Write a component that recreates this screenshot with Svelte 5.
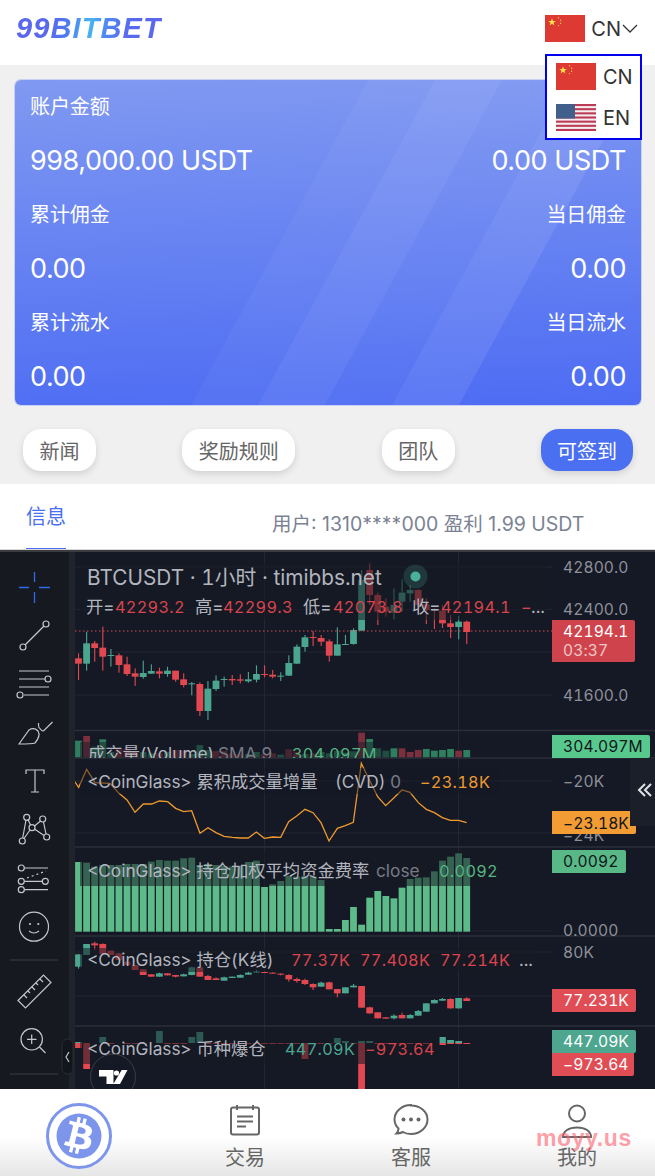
<script>
  const X = (i) => 78.5 + i * 8.088;
  const price = [
    ['r',325,341,310,390],['g',280,341,245,362],['r',280,294,273,335],['r',293,320,230,362],['g',315,318,297,350],
    ['r',316,345,310,368],['r',343,372,320,378],['r',370,380,355,408],['g',369,381,332,386],['g',363,371,343,372],
    ['r',364,371,353,385],['g',362,372,350,380],['r',362,389,362,395],['r',388,405,370,412],['g',400,402,396,436],
    ['r',402,483,397,498],['g',416,483,393,510],['g',392,417,376,423],['g',387,390,380,410],['r',387,391,375,405],
    ['r',388,392,373,400],['g',388,394,366,398],['g',372,389,346,397],['r',372,375,346,382],['r',374,380,360,385],
    ['g',377,379,367,393],['g',339,377,316,378],['g',290,341,283,342],['g',262,291,255,305],['r',261,264,243,288],
    ['r',264,275,255,288],['r',274,317,268,335],['g',283,317,232,317],['g',282,284,255,284],['g',240,282,235,284],
    ['g',90,242,60,242],['r',60,135,40,165],['r',135,185,128,225],['r',170,185,145,200],['g',165,188,115,208],
    ['g',128,155,88,185],['g',120,130,105,155],['r',120,165,118,195],['r',163,180,145,222],['r',178,180,175,237],
    ['r',182,220,165,234],['r',220,231,195,264],['g',215,231,198,268],['r',215,246,212,282]
  ];
  const interest = [
    ['g',583,620,583,626],['g',552,585,552,585],['r',550,556,545,570],['r',552,582,550,582],['r',572,585,572,585],
    ['r',580,600,580,600],['r',605,615,605,615],['r',615,630,615,630],['r',628,645,628,645],['r',643,650,643,650],
    ['g',640,650,638,650],['r',640,646,640,646],['r',645,650,645,652],['g',643,649,641,649],['g',622,645,620,646],
    ['r',622,650,620,650],['r',648,660,645,660],['r',655,660,652,660],['g',652,662,650,662],['g',650,654,650,654],
    ['g',645,653,643,653],['g',638,644,635,644],['g',634,637,630,637],['r',636,638,634,638],['r',638,640,637,640],
    ['r',641,644,640,646],['r',645,658,643,665],['r',657,663,653,668],['r',660,672,656,675],['r',672,682,670,690],
    ['g',668,680,665,680],['r',667,688,665,688],['r',687,700,687,712],['g',682,700,682,700],['g',677,682,672,682],
    ['r',678,743,678,743],['r',742,760,740,762],['r',757,775,757,775],['r',772,776,772,776],['g',767,775,763,778],
    ['r',765,775,758,775],['g',765,775,762,775],['g',753,767,750,767],['g',730,755,730,755],['g',720,730,718,730],
    ['g',717,722,714,722],['r',717,745,715,746],['g',714,745,714,746],['r',715,723,712,723]
  ];
  const volTops = [572,558,590,568,606,598,596,603,606,610,610,606,600,602,612,585,600,603,603,610,612,612,606,612,610,614,598,605,612,610,606,610,603,608,604,548,567,595,602,595,595,606,600,597,602,600,597,602,600];
  const volColor = 'grgggrrrggrgrrgggrrrrggrrgrrgrgggggrggggrrrggggrg';
  const fundTops = [306,308,320,315,315,315,312,312,312,305,300,302,302,295,293,315,312,315,318,320,318,306,302,381,373,363,347,350,348,350,360,507,507,480,441,494,413,393,408,415,383,357,353,352,334,302,290,280,294,303];
  const cvd = [[223,63],[236,82],[260,28],[285,68],[330,70],[357,100],[381,120],[405,157],[430,132],[455,132],[478,123],[503,125],[527,145],[551,155],[575,152],[600,220],[624,203],[648,218],[672,229],[697,232],[721,234],[745,234],[769,216],[793,235],[818,231],[842,232],[866,185],[891,167],[915,148],[939,158],[963,188],[987,243]];
  const cvdRight = [[12,243],[37,205],[61,197],[85,187],[109,10],[133,60],[158,110],[182,137],[207,113],[231,90],[255,97],[280,128],[304,148],[328,158],[352,173],[376,181],[401,181],[425,188]];
  const cvdLine = [
    ...cvd.map(([x, y]) => `${x / 3},${760 + y / 3}`),
    ...cvdRight.map(([x, y]) => `${325 + x / 3},${760 + y / 3}`)
  ].join(' ');
  // Long-side and short-side liquidations, index and height in px from the baseline
  const longs = [[0,1],[3,6],[10,12],[14,6],[15,11],[32,5],[33,2],[35,2],[36,2],[45,6],[46,3],[47,2]];
  const shorts = [[0,5],[1,26],[35,50],[28,16],[34,1],[45,2],[46,1],[47,1],[48,1]];
  const dashes = [4,6,7,8,11,12,13,16,17,18,19,20,21,22,23,24,25,26,27,29,30,31,37,38,39,40,41,42,43];
  const fills = { g: '#4ba68f', r: '#e2484f' };
  const rows = [
    { l: '账户金额', v: '998,000.00 USDT', rl: '团队金额', rv: '0.00 USDT' },
    { l: '累计佣金', v: '0.00', rl: '当日佣金', rv: '0.00' },
    { l: '累计流水', v: '0.00', rl: '当日流水', rv: '0.00' }
  ];
  const links = ['新闻', '奖励规则', '团队'];
  const stripes = [0, 134];
  const usStripes = [0, 2, 4, 6, 8, 10, 12];
</script>

{#snippet cnFlag()}
  <svg class="flag" viewBox="0 0 40 27">
    <rect width="40" height="27" fill="#de3a34" />
    <path d="M7 3.200l.95 2.700 2.850.1-2.250 1.750.8 2.700-2.350-1.600-2.350 1.600.8-2.700-2.250-1.750 2.850-.1z" fill="#f8e04a" />
    <g fill="#f2c94a">
      <circle cx="13.500" cy="2.800" r=".7" /><circle cx="15.600" cy="5.200" r=".7" />
      <circle cx="15.600" cy="8.200" r=".7" /><circle cx="13.500" cy="10.600" r=".7" />
    </g>
  </svg>
{/snippet}

{#snippet usFlag()}
  <svg class="flag" viewBox="0 0 40 27">
    <defs>
      <pattern id="usa-stars" width="2" height="2" patternUnits="userSpaceOnUse">
        <circle cx="1" cy="1" r=".45" fill="#b6c4da" />
      </pattern>
    </defs>
    <rect width="40" height="27" fill="#f4eef0" />
    {#each usStripes as s}
      <rect y={s * 2.077} width="40" height="2.077" fill="#bb3a55" />
    {/each}
    <rect width="19" height="14.500" fill="#30517f" />
    <rect width="19" height="14.500" fill="url(#usa-stars)" />
  </svg>
{/snippet}

{#snippet candles(list, base)}
  {#each list as [c, top, bot, wt, wb], i}
    <rect x={X(i) - 0.5} y={base + wt / 3} width="1.100" height={Math.max(0, (wb - wt) / 3)} fill={fills[c]} />
    <rect x={X(i) - 3.400} y={base + top / 3} width="6.800" height={Math.max(1, (bot - top) / 3)} fill={fills[c]} />
  {/each}
{/snippet}

<div class="page">
  <header class="top">
    <span class="logo">99BITBET</span>
    <div class="lang">
      {@render cnFlag()}
      <span>CN</span>
      <svg class="chev" viewBox="0 0 16 9"><path d="M1 1l7 7 7-7" /></svg>
    </div>
    <ul class="menu">
      <li>{@render cnFlag()}<span>CN</span></li>
      <li>{@render usFlag()}<span>EN</span></li>
    </ul>
  </header>

  <section class="summary">
    <div class="card">
      <svg class="sheen" viewBox="0 0 626 325" preserveAspectRatio="none">
        {#each stripes as dx}
          <path d={`M${176 + dx} 325L${243 + dx} 325L${420 + dx} 0L${353 + dx} 0Z`} fill="#fff" opacity=".04" />
          <path d={`M${243 + dx} 325L${310 + dx} 325L${487 + dx} 0L${420 + dx} 0Z`} fill="#fff" opacity=".085" />
        {/each}
      </svg>
      {#each rows as r}
        <div class="row">
          <div><p class="label">{r.l}</p><p class="value">{r.v}</p></div>
          <div class="end"><p class="label">{r.rl}</p><p class="value">{r.rv}</p></div>
        </div>
      {/each}
    </div>
    <nav class="links">
      {#each links as item}
        <button>{item}</button>
      {/each}
      <button class="primary">可签到</button>
    </nav>
  </section>

  <section class="notice">
    <span class="tab">信息</span>
    <span class="ticker">用户: 1310****000 盈利 1.99 USDT</span>
  </section>

  <svg class="chart" viewBox="0 550 655 539" width="655" height="539">
    <rect x="0" y="550" width="655" height="539" fill="#151925" />
    <rect x="0" y="550" width="655" height="2" fill="#3a3c40" />

    <!-- grid -->
    <g class="grid">
      {#each [567, 609.6, 652, 695, 781, 833, 931, 952, 996] as y}
        <line x1="75" x2="552" y1={y} y2={y} />
      {/each}
      <line x1="264.500" x2="264.500" y1="552" y2="1089" />
      <line x1="458.500" x2="458.500" y1="552" y2="1089" />
    </g>

    <!-- price pane -->
    {@render candles(price, 550)}
    <rect x="80" y="563" width="467" height="57" fill="#151925" opacity=".55" />
    <circle cx="415.500" cy="576.500" r="12" fill="#4ba68f" opacity=".22" />
    <circle cx="415.500" cy="576.500" r="5" fill="#4bb09a" />
    <line class="last" x1="75" x2="552" y1="631" y2="631" />

    <!-- volume pane -->
    {#each volTops as t, i}
      <rect x={X(i) - 3.400} y={550 + t / 3} width="6.800" height={(623 - t) / 3}
        fill={volColor[i] === 'g' ? '#2d7f5f' : '#7c2f3c'} />
    {/each}
    <rect x="80" y="742" width="310" height="16" fill="#151925" opacity=".5" />

    <!-- cumulative volume delta -->
    <polyline class="cvd" points={cvdLine} />
    <rect x="80" y="768" width="420" height="26" fill="#151925" opacity=".45" />

    <!-- funding rate bars -->
    {#each fundTops as t, i}
      {#if i < 49}
        <rect x={X(i) - 3.400} y={760 + t / 3} width="6.800" height={(515 - t) / 3} fill="#5dbb8a" />
      {/if}
    {/each}
    <rect x="80" y="850" width="420" height="36" fill="#151925" opacity=".55" />

    <!-- open interest candles -->
    {@render candles(interest, 760)}
    <rect x="80" y="948" width="455" height="24" fill="#151925" opacity=".55" />

    <!-- liquidations -->
    {#each dashes as i}
      <rect x={X(i) - 3.400} y="1043" width="6.800" height="1" fill="#e2484f" />
    {/each}
    {#each longs as [i, h]}
      <rect x={X(i) - 3.400} y={1043 - h} width="6.800" height={h} fill="#4ba68f" />
    {/each}
    {#each shorts as [i, h]}
      <rect x={X(i) - 3.400} y="1043" width="6.800" height={h} fill="#e2484f" />
    {/each}
    <rect x="80" y="1030" width="360" height="34" fill="#151925" opacity=".55" />

    <!-- pane separators -->
    <g class="seps">
      {#each [730.5, 758, 847, 936, 1026] as y}
        <line x1="75" x2="655" y1={y} y2={y} />
      {/each}
    </g>

    <!-- legends -->
    <g class="legend">
      <text x="87" y="585" class="title">BTCUSDT · 1小时 · timibbs.net</text>
      <text x="86" y="613">开=</text><text x="115" y="613" class="red">42293.2</text>
      <text x="195" y="613">高=</text><text x="223" y="613" class="red">42299.3</text>
      <text x="303" y="613">低=</text><text x="333" y="613" class="red">42073.8</text>
      <text x="412" y="613">收=</text><text x="441" y="613" class="red">42194.1</text>
      <text x="521" y="613" class="red">−</text><text x="531" y="613">...</text>

      <svg x="0" y="732" width="552" height="26" viewBox="0 732 552 26">
        <text x="88" y="760">成交量(Volume)</text>
        <text x="218" y="760" class="mute">SMA 9</text>
        <text x="292" y="760" class="lime">304.097M</text>
      </svg>

      <text x="87" y="788">&lt;CoinGlass&gt; 累积成交量增量</text>
      <text x="335" y="788">(CVD)</text>
      <text x="390" y="788" class="mute">0</text>
      <text x="420" y="788" class="amber">−23.18K</text>

      <text x="87" y="877">&lt;CoinGlass&gt; 持仓加权平均资金费率</text>
      <text x="376" y="877" class="mute">close</text>
      <text x="439" y="877" class="lime">0.0092</text>

      <text x="87" y="966">&lt;CoinGlass&gt; 持仓(K线)</text>
      <text x="291" y="966" class="red">77.37K</text>
      <text x="360" y="966" class="red">77.408K</text>
      <text x="440" y="966" class="red">77.214K</text>
      <text x="519" y="966">...</text>

      <text x="87" y="1055">&lt;CoinGlass&gt; 币种爆仓</text>
      <text x="285" y="1055" class="teal">447.09K</text>
      <text x="365" y="1055" class="red">−973.64</text>
    </g>

    <!-- price scale -->
    <g class="scale">
      <text x="563" y="572.500">42800.0</text>
      <text x="563" y="615">42400.0</text>
      <text x="563" y="700.500">41600.0</text>
      <text x="563" y="787">−20K</text>
      <text x="563" y="841">−24K</text>
      <text x="563" y="936">0.0000</text>
      <text x="563" y="958">80K</text>
    </g>
    <g class="tags">
      <path d="M552 620h81a2 2 0 0 1 2 2v38a2 2 0 0 1-2 2h-81z" fill="#cf444c" />
      <text x="563" y="637" fill="#fff">42194.1</text>
      <text x="563" y="656" fill="#f0c5c8">03:37</text>
      <path d="M552 735h96a2 2 0 0 1 2 2v19a2 2 0 0 1-2 2h-96z" fill="#58c98c" />
      <text x="563" y="752" fill="#10151c">304.097M</text>
      <path d="M552 811h82a2 2 0 0 1 2 2v19a2 2 0 0 1-2 2h-82z" fill="#f29c33" />
      <text x="563" y="829" fill="#10151c">−23.18K</text>
      <path d="M552 850h72a2 2 0 0 1 2 2v19a2 2 0 0 1-2 2h-72z" fill="#59b986" />
      <text x="563" y="867" fill="#10151c">0.0092</text>
      <path d="M552 989h82a2 2 0 0 1 2 2v19a2 2 0 0 1-2 2h-82z" fill="#e04d55" />
      <text x="563" y="1006" fill="#fff">77.231K</text>
      <path d="M552 1030h82a2 2 0 0 1 2 2v19a2 2 0 0 1-2 2h-82z" fill="#4ea68f" />
      <text x="563" y="1047" fill="#fff">447.09K</text>
      <path d="M552 1053h82v21a2 2 0 0 1-2 2h-80z" fill="#e04d55" />
      <text x="563" y="1070" fill="#fff">−973.64</text>
    </g>

    <!-- collapse handle for the side panel -->
    <rect x="630" y="758" width="25" height="68" fill="#1b1f2a" />
    <path class="dbl" d="M645 784l-6 6 6 6M651 784l-6 6 6 6" />

    <!-- left drawing toolbar -->
    <rect x="0" y="552" width="69" height="537" fill="#16191f" />
    <rect x="69" y="552" width="6" height="537" fill="#20232a" />

    <g class="cross">
      <path d="M34.500 572v10M34.500 592v11M19 587.500h10M39 587.500h11" />
    </g>
    <g class="tool">
      <circle cx="46" cy="624" r="3" /><circle cx="23" cy="647" r="3" /><path d="M25 645l19-19" />

      <path d="M19 671h30M19 679h26M19 687h30M24 695h25" />
      <circle cx="48" cy="679" r="3" /><circle cx="20" cy="695" r="3" />

      <path d="M19 744l10-14q5-3 9 1 3 5-3 12-3 1-16 1zM38.500 723q0 5 1 5 2 3 4 3l9-9" />

      <path d="M26 774v-4h18v4M35 770v22M31 792h8" />

      <circle cx="26.700" cy="817.300" r="3" /><circle cx="42.700" cy="819" r="3" /><circle cx="32" cy="827.700" r="3" />
      <circle cx="22.300" cy="841" r="3" /><circle cx="46.700" cy="837" r="3" />
      <path d="M26 820l-3.300 18M28 819.500l2.500 5.500M24 838.500l6-8.500M34.500 826l6-5M43.500 822l2.500 12M34.500 829l9.500 6.500" />

      <circle cx="21.300" cy="868" r="3" /><circle cx="21.300" cy="881.300" r="3" /><circle cx="45.300" cy="881.300" r="3" /><circle cx="21.300" cy="889.700" r="3" />
      <path d="M24.500 868h23.500M24.500 881.300h18M24.500 889.700h23.500" />
      <path class="dot" d="M27 878l19-7" />

      <circle cx="34" cy="926.700" r="14.500" />
      <circle class="solid" cx="30" cy="924" r="1.100" /><circle class="solid" cx="38.300" cy="924" r="1.100" />
      <path d="M29 931q5 4 10 0" />

      <path class="rule" d="M10 960h48M10 1074h48" />

      <path d="M18 1000.500l25.500-25.500 7.500 7.500-25.500 25.500zM24 995l3 3M28 991l2 2M32 987l3 3M36 983l2 2M40 979l3 3" />

      <circle cx="31.700" cy="1039.300" r="10.700" />
      <path d="M27 1039.300h9.500M31.700 1034.500v9.500M39.500 1047l6 6" />
    </g>

    <!-- toolbar collapse pill -->
    <rect class="pill" x="62" y="1039" width="11" height="35" rx="5.500" />
    <path class="tool-line" d="M69 1052l-3 5 3 5" />

    <!-- attribution badge -->
    <circle cx="113" cy="1076.700" r="22.500" fill="#151925" stroke="#3b3e47" stroke-width="1" />
    <path d="M99 1070h14.500v14h-7v-7.500h-7.500zM121.700 1070h5.800l-7.500 14h-6.700z" fill="#fff" />
    <circle cx="116.500" cy="1073" r="2.600" fill="#fff" />
  </svg>

  <footer class="tabs">
    <div class="item coin">
      <svg viewBox="0 0 66 66" width="66" height="66">
        <circle cx="33" cy="33" r="31.500" fill="#fff" stroke="#7d96ec" stroke-width="3" />
        <circle cx="33" cy="33" r="22.500" fill="#7d96ec" />
        <g transform="translate(33 33) scale(2.450) translate(-12 -12)">
          <path fill="#fff" d="M17.288 10.291c.24-1.59-.974-2.45-2.64-3.03l.54-2.153-1.315-.33-.525 2.107c-.345-.087-.705-.167-1.064-.25l.526-2.127-1.32-.33-.54 2.165c-.285-.067-.565-.132-.84-.2l-1.815-.45-.35 1.407s.975.225.955.236c.535.136.63.486.615.766l-1.477 5.92c-.075.166-.24.406-.614.314.015.02-.96-.24-.96-.24l-.66 1.51 1.71.426.93.242-.54 2.19 1.32.327.54-2.17c.36.1.705.19 1.05.273l-.51 2.154 1.32.33.545-2.19c2.24.427 3.93.257 4.64-1.774.57-1.637-.03-2.58-1.217-3.196.854-.193 1.5-.76 1.68-1.93h.01zm-3.01 4.22c-.404 1.64-3.157.75-4.05.53l.72-2.9c.896.23 3.757.67 3.33 2.37zm.41-4.24c-.37 1.49-2.662.735-3.405.55l.654-2.64c.744.18 3.137.524 2.75 2.084v.006z" />
        </g>
      </svg>
    </div>
    <div class="item">
      <svg class="ico" viewBox="0 0 32 32" width="32" height="32">
        <rect x="2" y="3.500" width="28" height="27" rx="2" />
        <path d="M8 1v5M24 1v5M8 12.500h16M8 17.500h16M8 22.500h9" />
      </svg>
      <span>交易</span>
    </div>
    <div class="item">
      <svg class="ico" viewBox="0 0 36 32" width="36" height="32">
        <path d="M18 1.500c9 0 16.500 6 16.500 14S27 30 18 30c-3 0-6-.7-8-2-2 1-4 1.500-6.500 1.500 1.300-1.300 2-3 2-5-2.500-2.500-4-5.500-4-9 0-8 7.500-14.500 16.500-14.500z" />
        <circle class="solid" cx="10.500" cy="15.500" r="2" /><circle class="solid" cx="18" cy="15.500" r="2" /><circle class="solid" cx="25.500" cy="15.500" r="2" />
      </svg>
      <span>客服</span>
    </div>
    <div class="item">
      <svg class="ico" viewBox="0 0 32 35" width="32" height="35">
        <circle cx="16" cy="9.500" r="8" />
        <path d="M2 33c0-6 6-9.500 14-9.500S30 27 30 33z" />
      </svg>
      <span>我的</span>
    </div>
    <span class="mark">moyy.us</span>
  </footer>
</div>

<style>
  :global(body) {
    margin: 0;
    background: #f0f0f0;
  }
  .page {
    width: 655px;
    height: 1176px;
    overflow: hidden;
    font-family: Inter, "Noto Sans CJK SC", sans-serif;
    display: flex;
    flex-direction: column;
  }
  p {
    margin: 0;
  }

  .top {
    position: relative;
    height: 65px;
    flex: none;
    background: #fff;
    display: flex;
    align-items: center;
    justify-content: space-between;
    padding: 0 17px 8px 16px;
    box-sizing: border-box;
  }
  .logo {
    font: italic 700 29px "Liberation Sans", sans-serif;
    letter-spacing: 1.100px;
    background: linear-gradient(100deg, #5a68ee 0 24%, #4f7bf0 36%, #47b4f2 50%, #5085f2 62%, #5a68ee 78%);
    -webkit-background-clip: text;
    background-clip: text;
    color: transparent;
  }
  .flag {
    width: 40px;
    height: 27px;
    display: block;
  }
  .lang {
    display: flex;
    align-items: center;
    font-size: 20px;
    color: #333;
  }
  .lang span {
    margin-left: 6px;
  }
  .chev {
    width: 16px;
    height: 9px;
    margin: 0 0 0 1px;
    fill: none;
    stroke: #333;
    stroke-width: 1.300;
  }
  .menu {
    position: absolute;
    z-index: 2;
    left: 545px;
    top: 54px;
    width: 97px;
    height: 86px;
    box-sizing: border-box;
    margin: 0;
    padding: 7px 0 0 9px;
    list-style: none;
    background: #fff;
    border: 2px solid #0000f0;
    font-size: 20px;
    color: #333;
  }
  .menu li {
    display: flex;
    align-items: center;
    gap: 7px;
    height: 27px;
    margin-bottom: 14px;
  }

  .summary {
    flex: none;
    height: 419px;
    box-sizing: border-box;
    padding: 15px 14px 0 15px;
  }
  .card {
    position: relative;
    overflow: hidden;
    width: 626px;
    height: 325px;
    box-sizing: border-box;
    padding: 14px 15px 0;
    border-radius: 6px;
    background: linear-gradient(178deg, #8099f1, #4d6cf3);
    color: #fff;
    box-shadow: 0 0 0 1px rgba(160, 178, 245, .5);
  }
  .sheen {
    position: absolute;
    inset: 0;
    width: 100%;
    height: 100%;
  }
  .row {
    position: relative;
    display: flex;
    justify-content: space-between;
    height: 108px;
  }
  .end {
    text-align: right;
  }
  .label {
    font-size: 20px;
    line-height: 26px;
    letter-spacing: -0.100px;
  }
  .value {
    font-size: 27px;
    line-height: 34px;
    margin-top: 24px;
    letter-spacing: -0.450px;
  }
  .links {
    display: flex;
    justify-content: space-between;
    padding: 24px 8px 0 8px;
  }
  button {
    height: 42px;
    padding: 0 16.500px;
    border: 0;
    border-radius: 18px;
    background: #fff;
    color: #666;
    font: inherit;
    font-size: 20px;
    box-shadow: 0 3px 7px rgba(0, 0, 0, .13);
  }
  button.primary {
    background: #4a6ff0;
    color: #fff;
    padding: 0 16px;
  }

  .notice {
    position: relative;
    flex: none;
    height: 66px;
    box-sizing: border-box;
    background: #fff;
    border-bottom: 1px solid #d8d8d8;
    display: flex;
    font-size: 20px;
  }
  .tab {
    height: 65px;
    box-sizing: border-box;
    margin-left: 26px;
    padding-top: 19px;
    line-height: 28px;
    color: #4a6ff0;
    font-size: 20px;
    border-bottom: 1px solid #4a6ff0;
  }
  .ticker {
    margin-left: 206px;
    padding-top: 26px;
    line-height: 28px;
    color: #7b8294;
    font-size: 19.500px;
    white-space: nowrap;
  }

  .chart {
    display: block;
    flex: none;
    font-family: Inter, "Noto Sans CJK SC", sans-serif;
    font-variant-numeric: tabular-nums;
  }
  .grid line {
    stroke: #232733;
    stroke-width: 1;
  }
  .seps line {
    stroke: #2b2f3a;
    stroke-width: 1.500;
  }
  .last {
    stroke: #d24b54;
    stroke-width: 1;
    stroke-dasharray: 1.500 2.500;
  }
  .cvd {
    fill: none;
    stroke: #ee9a2d;
    stroke-width: 1.300;
  }
  .legend text {
    font-size: 17.300px;
    fill: #b2b5be;
  }
  .legend .title {
    font-size: 20.800px;
  }
  .legend .red {
    fill: #d9444c;
    font-size: 16.300px;
    letter-spacing: .3px;
  }
  .legend .lime {
    fill: #55b582;
    font-size: 16.300px;
    letter-spacing: .3px;
  }
  .legend .teal {
    fill: #4ba68f;
    font-size: 16.300px;
    letter-spacing: .3px;
  }
  .legend .amber {
    fill: #ee9a2d;
    font-size: 16.300px;
    letter-spacing: .3px;
  }
  .legend .mute {
    fill: #787b86;
  }
  .scale text {
    font-size: 15.600px;
    fill: #8d9099;
    letter-spacing: .1px;
  }
  .tags text {
    font-size: 15.600px;
    letter-spacing: .1px;
  }
  .dbl {
    fill: none;
    stroke: #dfe1e6;
    stroke-width: 2;
  }
  .cross path {
    fill: none;
    stroke: #2e6be8;
    stroke-width: 1.300;
  }
  .tool circle,
  .tool path {
    fill: none;
    stroke: #c5c7cb;
    stroke-width: 1.200;
  }
  .tool .solid {
    fill: #c5c7cb;
    stroke: none;
  }
  .tool .rule {
    stroke: #3c3f45;
  }
  .tool .dot {
    stroke-dasharray: 2 3;
  }
  .pill {
    fill: #12151b;
    stroke: #2a2d33;
  }
  .tool-line {
    fill: none;
    stroke: #c5c7cb;
    stroke-width: 1.200;
  }

  .tabs {
    position: relative;
    flex: none;
    height: 87px;
    display: grid;
    grid-template-columns: repeat(4, 120px);
    column-gap: 46px;
    padding-left: 19px;
    background: linear-gradient(#fff 0 55%, #e6e6e6);
  }
  .item {
    display: flex;
    flex-direction: column;
    align-items: center;
    font-size: 20px;
    line-height: 28px;
    color: #666;
  }
  .item span {
    position: absolute;
    top: 55px;
  }
  .item svg {
    margin-top: 15px;
  }
  .item.coin svg {
    margin-top: 14px;
  }
  .ico {
    fill: none;
    stroke: #666;
    stroke-width: 2;
  }
  .ico .solid {
    fill: #666;
    stroke: none;
  }
  .mark {
    position: absolute;
    left: 536px;
    top: 31px;
    font: 700 23px/36px "Liberation Sans", sans-serif;
    letter-spacing: .6px;
    color: rgba(252, 95, 110, .62);
  }
</style>
